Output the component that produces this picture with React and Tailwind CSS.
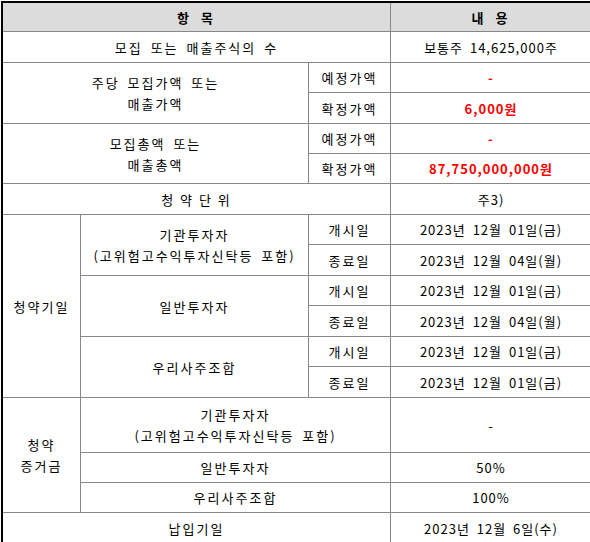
import React from 'react';

const FONT = { fontFamily: '"Noto Sans CJK KR", "Liberation Sans", sans-serif' };

/** One table cell; placement and colour come in through className. */
function Cell({ className = '', children }) {
  return (
    <div className={`flex flex-col items-center justify-center bg-white text-center text-[13px] leading-[21px] [word-spacing:3px] ${className}`}>
      {children}
    </div>
  );
}

const Label = ({ className = '', children }) => (
  <Cell className={`tracking-[2px] ${className}`}>{children}</Cell>
);

const Value = ({ className = '', children }) => (
  <Cell className={`tracking-[1px] ${className}`}>{children}</Cell>
);

export default function App() {
  return (
    <div className="w-[590px] h-[542px] overflow-hidden bg-white pt-px pl-px text-black" style={FONT}>
      <div className="border-t-2 border-l-2 border-black w-[592px]">
        <div className="grid grid-cols-[77px_227px_81px_200px] grid-rows-[28px_30px_29px_30px_29px_29px_30px_29px_30px_29px_30px_29px_30px_54px_29px_29px_30px] gap-px bg-[#888888]">
          {/* header */}
          <Cell className="col-start-1 col-span-3 row-start-1 !bg-[#dcdcdc] font-bold tracking-[3px]">항 목</Cell>
          <Cell className="col-start-4 row-start-1 !bg-[#dcdcdc] font-bold tracking-[3px]">내 용</Cell>

          <Label className="col-start-1 col-span-3 row-start-2">모집 또는 매출주식의 수</Label>
          <Value className="col-start-4 row-start-2">보통주 14,625,000주</Value>

          {/* 주당 가액 */}
          <Label className="col-start-1 col-span-2 row-start-3 row-span-2">
            <span>주당 모집가액 또는</span>
            <span>매출가액</span>
          </Label>
          <Label className="col-start-3 row-start-3">예정가액</Label>
          <Value className="col-start-4 row-start-3 font-bold text-[#ff0000]">-</Value>
          <Label className="col-start-3 row-start-4">확정가액</Label>
          <Value className="col-start-4 row-start-4 font-bold text-[#ff0000]">6,000원</Value>

          {/* 총액 */}
          <Label className="col-start-1 col-span-2 row-start-5 row-span-2">
            <span>모집총액 또는</span>
            <span>매출총액</span>
          </Label>
          <Label className="col-start-3 row-start-5">예정가액</Label>
          <Value className="col-start-4 row-start-5 font-bold text-[#ff0000]">-</Value>
          <Label className="col-start-3 row-start-6">확정가액</Label>
          <Value className="col-start-4 row-start-6 font-bold text-[#ff0000]">87,750,000,000원</Value>

          <Label className="col-start-1 col-span-3 row-start-7 ![word-spacing:0px]">청 약 단 위</Label>
          <Value className="col-start-4 row-start-7">주3)</Value>

          {/* 청약기일 */}
          <Label className="col-start-1 row-start-8 row-span-6">청약기일</Label>
          <Label className="col-start-2 row-start-8 row-span-2">
            <span>기관투자자</span>
            <span>(고위험고수익투자신탁등 포함)</span>
          </Label>
          <Label className="col-start-3 row-start-8">개시일</Label>
          <Value className="col-start-4 row-start-8">2023년 12월 01일(금)</Value>
          <Label className="col-start-3 row-start-9">종료일</Label>
          <Value className="col-start-4 row-start-9">2023년 12월 04일(월)</Value>

          <Label className="col-start-2 row-start-10 row-span-2">일반투자자</Label>
          <Label className="col-start-3 row-start-10">개시일</Label>
          <Value className="col-start-4 row-start-10">2023년 12월 01일(금)</Value>
          <Label className="col-start-3 row-start-11">종료일</Label>
          <Value className="col-start-4 row-start-11">2023년 12월 04일(월)</Value>

          <Label className="col-start-2 row-start-12 row-span-2">우리사주조합</Label>
          <Label className="col-start-3 row-start-12">개시일</Label>
          <Value className="col-start-4 row-start-12">2023년 12월 01일(금)</Value>
          <Label className="col-start-3 row-start-13">종료일</Label>
          <Value className="col-start-4 row-start-13">2023년 12월 01일(금)</Value>

          {/* 청약 증거금 */}
          <Label className="col-start-1 row-start-14 row-span-3">
            <span>청약</span>
            <span>증거금</span>
          </Label>
          <Label className="col-start-2 col-span-2 row-start-14">
            <span>기관투자자</span>
            <span>(고위험고수익투자신탁등 포함)</span>
          </Label>
          <Value className="col-start-4 row-start-14">-</Value>
          <Label className="col-start-2 col-span-2 row-start-15">일반투자자</Label>
          <Value className="col-start-4 row-start-15">50%</Value>
          <Label className="col-start-2 col-span-2 row-start-16">우리사주조합</Label>
          <Value className="col-start-4 row-start-16">100%</Value>

          <Label className="col-start-1 col-span-3 row-start-17">납입기일</Label>
          <Value className="col-start-4 row-start-17">2023년 12월 6일(수)</Value>
        </div>
      </div>
    </div>
  );
}
